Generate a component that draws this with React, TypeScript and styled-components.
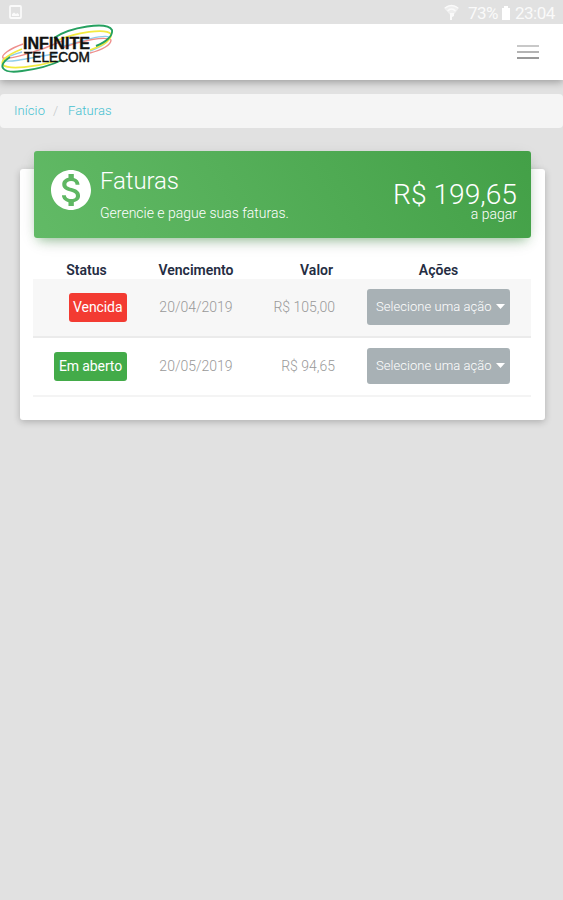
import React from "react";
import styled, { createGlobalStyle } from "styled-components";

const Global = createGlobalStyle`
  * { box-sizing: border-box; }
  html, body { margin: 0; background: #e1e1e1; }
  body { font-family: Roboto, "Liberation Sans", sans-serif; font-weight: 300; overflow: hidden; }
`;

const Page = styled.div`
  width: 563px;
  height: 900px;
  background: #e1e1e1;
`;

const StatusBar = styled.div`
  height: 24px;
  padding: 0 7px 0 9px;
  display: flex;
  align-items: center;
  justify-content: space-between;
  color: #fafafa;
  font-size: 17px;
  font-weight: 400;
`;

const StatusGroup = styled.div`
  display: flex;
  align-items: center;
  height: 24px;
  padding-top: 2px;
`;

const StatusText = styled.span<{ $width: number }>`
  width: ${(p) => p.$width}px;
  letter-spacing: -0.5px;
  white-space: nowrap;
`;

const NavBar = styled.header`
  height: 56px;
  background: #fff;
  box-shadow: 0 2px 8px rgba(0, 0, 0, 0.32);
  clip-path: inset(0 0 -16px 0);
  display: flex;
  justify-content: space-between;
`;

const MenuButton = styled.button`
  width: 22px;
  height: 16px;
  margin: 20px 24px 0 0;
  padding: 1px 0;
  border: 0;
  background: transparent;
  display: flex;
  flex-direction: column;
  justify-content: space-between;
`;

const MenuLine = styled.span<{ $color: string }>`
  display: block;
  width: 22px;
  height: 2px;
  background: ${(p) => p.$color};
`;

const Breadcrumb = styled.nav`
  height: 34px;
  margin-top: 14px;
  padding: 0 14px 2px;
  border-radius: 4px;
  background: #f5f5f5;
  display: flex;
  align-items: center;
  font-size: 13px;
  color: #c3c8ca;
`;

const Crumb = styled.a<{ $width: number; $spacing: number }>`
  width: ${(p) => p.$width}px;
  letter-spacing: ${(p) => p.$spacing}px;
  color: #45c0d0;
`;

const Slash = styled.span`
  width: 15px;
`;

const Card = styled.section`
  width: 525px;
  height: 251px;
  margin: 41px 0 0 20px;
  padding: 0 14px;
  border-radius: 3px;
  background: #fff;
  box-shadow: 0 2px 7px rgba(0, 0, 0, 0.22);
  display: flex;
  flex-direction: column;
`;

const CardHeader = styled.header`
  flex: none;
  height: 87px;
  margin-top: -18.5px;
  padding: 0 14px 0 17px;
  border-radius: 3px;
  background: linear-gradient(60deg, #62ba66, #43a047);
  box-shadow: 0 5px 18px -5px rgba(0, 0, 0, 0.2), 0 6px 10px -4px rgba(76, 175, 80, 0.45);
  color: #fff;
  display: flex;
`;

const HeaderIcon = styled.div`
  width: 49px;
  padding-top: 19.5px;
`;

const Heading = styled.div`
  flex: 1;
`;

const Title = styled.h1`
  margin: 16.5px 0 0;
  font-size: 24px;
  line-height: 29px;
  font-weight: 300;
  letter-spacing: -0.1px;
`;

const Subtitle = styled.p`
  margin: 9px 0 0;
  font-size: 14px;
  line-height: 17px;
`;

const Total = styled.div`
  text-align: right;
`;

const Amount = styled.div`
  margin-top: 27px;
  font-size: 28.2px;
  line-height: 34px;
`;

const Due = styled.div`
  margin-top: -6px;
  font-size: 14px;
  line-height: 17px;
`;

const Table = styled.div`
  margin: 21.5px 0 0 -1px;
  width: 498px;
  font-size: 14px;
  color: #999;
`;

const columns = "93px 126px 82px 1fr";

const HeadRow = styled.div`
  display: grid;
  grid-template-columns: ${columns};
  height: 20px;
  padding-left: 7px;
  line-height: 23px;
  font-size: 14px;
  font-weight: 600;
  color: #252d43;
`;

const HeadCell = styled.div<{ $align?: string; $left?: number; $right?: number }>`
  text-align: ${(p) => p.$align ?? "center"};
  padding-left: ${(p) => p.$left ?? 0}px;
  padding-right: ${(p) => p.$right ?? 0}px;
`;

const Row = styled.div<{ $shade: boolean }>`
  display: grid;
  grid-template-columns: ${columns};
  height: 59px;
  padding-left: 7px;
  padding-bottom: 1px;
  align-items: center;
  background: ${(p) => (p.$shade ? "#f7f7f7" : "#fff")};
  border-bottom: 2px solid ${(p) => (p.$shade ? "#ebebeb" : "#f4f4f4")};
`;

const Cell = styled.div<{ $align: string; $right?: number }>`
  display: flex;
  justify-content: ${(p) => p.$align};
  padding-right: ${(p) => p.$right ?? 0}px;
`;

const Badge = styled.span<{ $color: string; $width: number }>`
  width: ${(p) => p.$width}px;
  height: 29px;
  margin-top: 1px;
  border-radius: 3px;
  background: ${(p) => p.$color};
  color: #fff;
  line-height: 28px;
  text-align: center;
  font-weight: 400;
  font-size: 14px;
  letter-spacing: -0.1px;
  white-space: nowrap;
`;

const ActionButton = styled.button`
  width: 143px;
  height: 36px;
  margin-left: 26px;
  padding: 0 5px 1px 9px;
  border: 0;
  border-radius: 3px;
  background: #a8b1b5;
  color: #fff;
  font: 300 13px Roboto, sans-serif;
  letter-spacing: 0.05px;
  white-space: nowrap;
  display: flex;
  align-items: center;
  justify-content: space-between;
`;

const Logo = () => (
  <svg width="116" height="56" viewBox="0 0 116 56">
    <g fill="none">
      <g stroke="#8fcdeb" strokeWidth="1.4">
        <path d="M22 28C12 31 3 34 3 36C6 39 22 36 58 29" />
        <path d="M64 22C80 17 104 10 109 13C110 17 102 23 90 27" />
      </g>
      <g stroke="#ee8f8c" strokeWidth="1.4">
        <path d="M23 20C9 25 1 31 3 34C8 36 38 28 62 17" />
        <path d="M62 24C82 16 106 12 111 16C111 21 102 26 90 29" />
      </g>
      <g stroke="#f3ea3f" strokeWidth="1.7">
        <path d="M56 17C76 8 106 4 111 10C112 16 102 22 90 26" />
        <path d="M22 25C7 31 0 37 3 41C9 46 36 43 56 37" />
      </g>
      <g stroke="#26a160" strokeWidth="1.9">
        <path d="M54 14C70 3 107-3 112 6C113 12 106 18 96 22" />
        <path d="M10 33C-4 42 2 50 22 47C38 45 52 41 62 36" />
      </g>
    </g>
    <g fontFamily="Liberation Sans, Arial, sans-serif" fill="#111" stroke="#111">
      <text x="23" y="25" fontSize="16" fontWeight="700" textLength="67" lengthAdjust="spacingAndGlyphs" strokeWidth="0.4">INFINITE</text>
      <text x="24" y="37.5" fontSize="15" textLength="66" lengthAdjust="spacingAndGlyphs" strokeWidth="0.5">TELECOM</text>
    </g>
  </svg>
);

const ImageIcon = () => (
  <svg width="13" height="14" viewBox="0 0 13 14">
    <rect x="1" y="1" width="11" height="12" rx="1" fill="none" stroke="#fafafa" strokeWidth="1.8" />
    <path d="M3 11V9l2-1.5L7 9l1.5-1L10 9.5V11z" fill="#fafafa" />
  </svg>
);

const WifiIcon = () => (
  <svg width="24" height="18" viewBox="0 0 24 18">
    <path d="M0 4Q7-2 15 4L8 13z" fill="#fafafa" opacity=".55" />
    <path d="M1 4Q7.5-1 14 4M3.5 7Q7.5 3 11.5 7" fill="none" stroke="#fafafa" strokeWidth="1.4" />
    <path d="M6 9h4v3l-2 1v3H6z" fill="#fafafa" />
  </svg>
);

const BatteryIcon = () => (
  <svg width="14" height="16" viewBox="0 0 14 16">
    <path d="M3 1h4v2h2v12H1V3h2z" fill="#fff" />
  </svg>
);

const MoneyIcon = () => (
  <svg width="40" height="40" viewBox="2 2 20 20">
    <path
      fill="#fff"
      d="M12 2C6.48 2 2 6.48 2 12s4.48 10 10 10 10-4.48 10-10S17.52 2 12 2zm1.41 16.09V20h-2.67v-1.93c-1.71-.36-3.16-1.46-3.27-3.4h1.96c.1 1.05.82 1.87 2.65 1.87 1.96 0 2.4-.98 2.4-1.59 0-.83-.44-1.61-2.67-2.14-2.48-.6-4.18-1.62-4.18-3.67 0-1.72 1.39-2.84 3.11-3.21V4h2.67v1.95c1.86.45 2.79 1.86 2.85 3.39H14.3c-.05-1.11-.64-1.87-2.22-1.87-1.5 0-2.4.68-2.4 1.64 0 .84.65 1.39 2.67 1.91s4.18 1.39 4.18 3.91c-.01 1.83-1.38 2.83-3.12 3.16z"
    />
  </svg>
);

const Caret = () => (
  <svg width="9" height="5" viewBox="0 0 9 5">
    <path d="M0 0h9L4.5 5z" fill="#fff" />
  </svg>
);

const invoices = [
  { status: "Vencida", color: "#f33b32", width: 58.5, date: "20/04/2019", value: "R$ 105,00" },
  { status: "Em aberto", color: "#43ab49", width: 73, date: "20/05/2019", value: "R$ 94,65" },
];

export default function App() {
  return (
    <Page>
      <Global />
      <StatusBar>
        <ImageIcon />
        <StatusGroup>
          <WifiIcon />
          <StatusText $width={33}>73%</StatusText>
          <BatteryIcon />
          <StatusText $width={41}>23:04</StatusText>
        </StatusGroup>
      </StatusBar>
      <NavBar>
        <Logo />
        <MenuButton aria-label="Menu">
          <MenuLine $color="#c8c8c8" />
          <MenuLine $color="#b4b4b4" />
          <MenuLine $color="#999" />
        </MenuButton>
      </NavBar>
      <Breadcrumb>
        <Crumb $width={39} $spacing={0.1}>Início</Crumb>
        <Slash>/</Slash>
        <Crumb $width={60} $spacing={0.1}>Faturas</Crumb>
      </Breadcrumb>
      <Card>
        <CardHeader>
          <HeaderIcon><MoneyIcon /></HeaderIcon>
          <Heading>
            <Title>Faturas</Title>
            <Subtitle>Gerencie e pague suas faturas.</Subtitle>
          </Heading>
          <Total>
            <Amount>R$ 199,65</Amount>
            <Due>a pagar</Due>
          </Total>
        </CardHeader>
        <Table>
          <HeadRow>
            <HeadCell>Status</HeadCell>
            <HeadCell>Vencimento</HeadCell>
            <HeadCell $align="right" $right={8}>Valor</HeadCell>
            <HeadCell $left={5}>Ações</HeadCell>
          </HeadRow>
          {invoices.map((invoice, i) => (
            <Row key={invoice.date} $shade={i % 2 === 0}>
              <Cell $align="end" $right={6}>
                <Badge $color={invoice.color} $width={invoice.width}>{invoice.status}</Badge>
              </Cell>
              <Cell $align="center">{invoice.date}</Cell>
              <Cell $align="end" $right={6}>{invoice.value}</Cell>
              <ActionButton>
                Selecione uma ação
                <Caret />
              </ActionButton>
            </Row>
          ))}
        </Table>
      </Card>
    </Page>
  );
}
